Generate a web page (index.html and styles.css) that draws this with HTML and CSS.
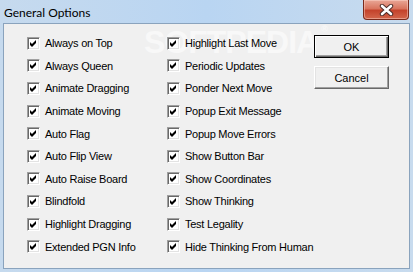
FILE: index.html
```html
<!DOCTYPE html>
<html lang="en">
<head>
    <meta charset="UTF-8">
    <title>General Options</title>
    <link rel="stylesheet" href="styles.css">
</head>
<body>

    <div class="window">
        <div class="titlebar">
            <span class="title">General Options</span>
            <button class="close" title="Close">
                <svg width="17" height="12" viewBox="0 0 17 12">
                    <path d="M4 2 L13 10 M13 2 L4 10" stroke="#4a2a26" stroke-width="4.4" stroke-linecap="round"/>
                    <path d="M4 2 L13 10 M13 2 L4 10" stroke="#ffffff" stroke-width="2.6" stroke-linecap="round"/>
                </svg>
            </button>
        </div>

        <div class="client">
            <!-- watermark from the screenshot -->
            <div class="watermark" aria-hidden="true">SOFTPEDIA<sup>&reg;</sup></div>

            <div class="options">
                <label class="option"><span class="check"></span>Always on Top</label>
                <label class="option"><span class="check"></span>Highlight Last Move</label>
                <label class="option"><span class="check"></span>Always Queen</label>
                <label class="option"><span class="check"></span>Periodic Updates</label>
                <label class="option"><span class="check"></span>Animate Dragging</label>
                <label class="option"><span class="check"></span>Ponder Next Move</label>
                <label class="option"><span class="check"></span>Animate Moving</label>
                <label class="option"><span class="check"></span>Popup Exit Message</label>
                <label class="option"><span class="check"></span>Auto Flag</label>
                <label class="option"><span class="check"></span>Popup Move Errors</label>
                <label class="option"><span class="check"></span>Auto Flip View</label>
                <label class="option"><span class="check"></span>Show Button Bar</label>
                <label class="option"><span class="check"></span>Auto Raise Board</label>
                <label class="option"><span class="check"></span>Show Coordinates</label>
                <label class="option"><span class="check"></span>Blindfold</label>
                <label class="option"><span class="check"></span>Show Thinking</label>
                <label class="option"><span class="check"></span>Highlight Dragging</label>
                <label class="option"><span class="check"></span>Test Legality</label>
                <label class="option"><span class="check"></span>Extended PGN Info</label>
                <label class="option"><span class="check"></span>Hide Thinking From Human</label>
            </div>

            <div class="buttons">
                <button class="btn default">OK</button>
                <button class="btn">Cancel</button>
            </div>
        </div>
    </div>

</body>
</html>
```

FILE: styles.css
```css
body {
    margin: 0;
    padding: 0;
    background-color: #c4d9ef;
}
.window {
    width: 413px;
    height: 272px;
    box-sizing: border-box;
    padding: 0 3px 3px 3px;
    background: linear-gradient(to right, #c6daee, #b9d5f2 50%, #c8dbee);
    display: flex;
    flex-direction: column;
}
.titlebar {
    height: 23px;
    display: flex;
    align-items: flex-start;
    justify-content: space-between;
}
.title {
    font-family: Lato, "Noto Sans", sans-serif;
    font-size: 12px;
    color: #000;
    padding: 5px 0 0 1px;
    line-height: 15px;
}
.close {
    width: 46px;
    height: 20px;
    margin-right: 1px;
    padding: 0;
    border: 1px solid #7a2a1c;
    border-top: none;
    border-radius: 0 0 4px 4px;
    background: linear-gradient(to bottom, #e9a797 0%, #d9755f 45%, #c4432c 55%, #d3664c 100%);
    box-shadow: inset 0 0 0 1px rgba(255, 220, 210, 0.45);
    display: flex;
    align-items: center;
    justify-content: center;
}
.client {
    position: relative;
    flex: 1;
    display: flex;
    align-items: flex-start;
    background-color: #f0f0f0;
    border: 1px solid #8aa3bd;
    overflow: hidden;
}
.watermark {
    position: absolute;
    left: 140px;
    top: 0;
    font-family: "Liberation Sans", Arial, sans-serif;
    font-weight: bold;
    font-size: 32px;
    color: #f8f8f8;
    letter-spacing: -1px;
}
.watermark sup {
    font-size: 9px;
    vertical-align: top;
    margin-left: 3px;
}
.options {
    position: relative;
    display: grid;
    grid-template-columns: 140px 147px;
    grid-auto-rows: 22.6px;
    margin: 8px 0 0 23px;
}
.option {
    display: flex;
    align-items: center;
    font-family: "Liberation Sans", Arial, sans-serif;
    font-size: 11px;
    letter-spacing: -0.25px;
    color: #000;
    white-space: nowrap;
}
.check {
    width: 13px;
    height: 13px;
    box-sizing: border-box;
    margin-right: 5px;
    background-color: #fff;
    border: 1px solid;
    border-color: #a0a0a0 #fff #fff #a0a0a0;
    box-shadow: inset 1px 1px #696969, inset -1px -1px #e3e3e3;
    background-image: url("data:image/svg+xml;utf8,<svg xmlns='http://www.w3.org/2000/svg' width='11' height='11' viewBox='0 0 11 11'><polygon points='2,4 4,6 8,2 8,5 4,9 2,7' fill='black'/></svg>");
    background-repeat: no-repeat;
    flex-shrink: 0;
}
.buttons {
    position: relative;
    display: flex;
    flex-direction: column;
    gap: 8px;
    margin-top: 11px;
}
.btn {
    width: 75px;
    height: 23px;
    box-sizing: border-box;
    padding: 0;
    font-family: "Liberation Sans", Arial, sans-serif;
    font-size: 11px;
    color: #000;
    background-color: #f0f0f0;
    border: 1px solid;
    border-color: #fff #696969 #696969 #fff;
    box-shadow: inset -1px -1px #a0a0a0, inset 1px 1px #e3e3e3;
}
.btn.default {
    border: 1px solid #000;
    box-shadow: inset 1px 1px #fff, inset -1px -1px #696969, inset -2px -2px #a0a0a0;
}
```
